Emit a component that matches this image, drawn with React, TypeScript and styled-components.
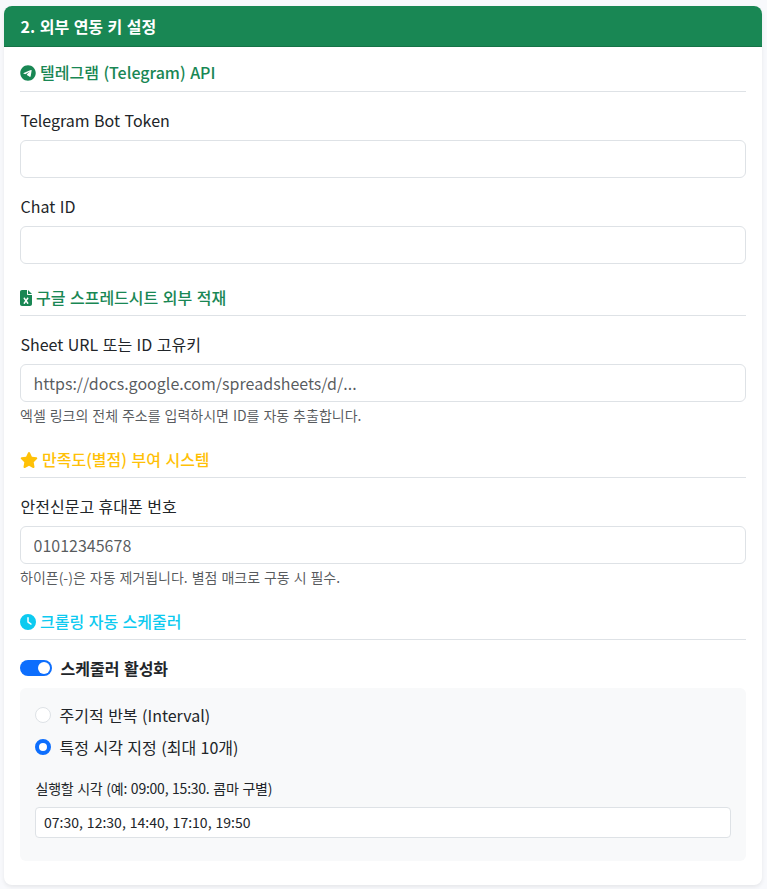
import React, { useState } from "react";
import styled, { createGlobalStyle } from "styled-components";
import { FaTelegram, FaFileExcel, FaStar, FaClock } from "react-icons/fa6";

const GlobalStyle = createGlobalStyle`
  *, *::before, *::after { box-sizing: border-box; }
  body {
    margin: 0;
    background: #f8f9fa;
    color: #212529;
    font-family: "Noto Sans CJK KR", "Noto Sans KR", sans-serif;
    font-size: 16px;
    line-height: 1.5;
    word-spacing: 0.9px;
  }
`;

const Page = styled.main`
  height: 889px;
  overflow: hidden;
  padding: 6px 5px 4px 4px;
  background: #f8f9fc;
`;

const Card = styled.section`
  height: 879px;
  border-radius: 8px;
  background: #fff;
  box-shadow: 0 2px 4px rgba(0, 0, 0, 0.075);
`;

const CardHeader = styled.header`
  height: 41px;
  padding: 8px 16.5px;
  border-bottom: 1px solid #167347;
  border-radius: 8px 8px 0 0;
  background: #198754;
  color: #fff;
  font-weight: 700;
`;

const CardBody = styled.div`
  padding: 16px;
`;

const Section = styled.section<{ $gap?: number }>`
  margin-bottom: ${({ $gap = 24 }) => $gap}px;
`;

const Heading = styled.h6<{ $color: string; $icon?: number; $pad?: number }>`
  display: flex;
  align-items: center;
  gap: 4px;
  margin: 0 0 16px;
  padding-bottom: ${({ $pad = 8 }) => $pad}px;
  border-bottom: 1px solid #dee2e6;
  color: ${({ $color }) => $color};
  font-size: 16px;
  font-weight: 500;
  line-height: 19px;

  svg {
    flex: none;
    height: 16px;
    width: ${({ $icon = 16 }) => $icon}px;
  }
`;

const Field = styled.div`
  & + & {
    margin-top: 16px;
  }
`;

const Label = styled.label<{ $small?: boolean }>`
  display: block;
  margin-bottom: 8px;
  padding-left: 0.5px;
  font-size: ${({ $small }) => ($small ? 14 : 16)}px;
  letter-spacing: ${({ $small }) => ($small ? "-0.24px" : "normal")};
`;

const Input = styled.input<{ $small?: boolean }>`
  display: block;
  width: 100%;
  height: ${({ $small }) => ($small ? 31 : 38)}px;
  padding: ${({ $small }) => ($small ? "3px 8px 5px" : "6px 12.5px")};
  border: 1px solid #dee2e6;
  border-radius: ${({ $small }) => ($small ? 4 : 6)}px;
  background: #fff;
  color: #212529;
  font-family: inherit;
  font-size: ${({ $small }) => ($small ? 14 : 16)}px;
  line-height: 1.5;
  letter-spacing: 0.01px;
  word-spacing: 0.8px;
  outline: none;

  &::placeholder {
    color: rgba(33, 37, 41, 0.75);
    opacity: 1;
  }
`;

const Help = styled.div`
  margin-top: 3px;
  margin-bottom: 25px;
  color: rgba(33, 37, 41, 0.75);
  font-size: 14px;
  line-height: 20px;
  word-spacing: 0.8px;
`;

const Option = styled.label<{ $bold?: boolean }>`
  display: flex;
  align-items: center;
  gap: 8.5px;
  height: 24px;
  margin-bottom: 8px;
  font-weight: ${({ $bold }) => ($bold ? 700 : 400)};
`;

const Switch = styled.input`
  appearance: none;
  display: flex;
  align-items: center;
  justify-content: ${({ checked }) => (checked ? "flex-end" : "flex-start")};
  width: 32px;
  height: 16px;
  margin: 0;
  padding: 0 2px;
  border-radius: 16px;
  background: ${({ checked }) => (checked ? "#0d6efd" : "#adb5bd")};

  &::before {
    content: "";
    width: 12px;
    height: 12px;
    border-radius: 50%;
    background: #fff;
  }
`;

const Radio = styled.input`
  appearance: none;
  width: 16px;
  height: 16px;
  margin: 0;
  border: 1px solid #dee2e6;
  border-radius: 50%;
  background: #fff;

  &:checked {
    border: 4px solid #0d6efd;
  }
`;

const Panel = styled.div`
  height: 173px;
  padding: 15px;
  border-radius: 6px;
  background: #f8f9fa;
`;

const TimeField = styled.div`
  margin-top: 19px;
`;

export default function App() {
  const [enabled, setEnabled] = useState(true);
  const [mode, setMode] = useState("times");
  const [times, setTimes] = useState("07:30, 12:30, 14:40, 17:10, 19:50");

  return (
    <>
      <GlobalStyle />
      <Page>
        <Card>
          <CardHeader>2. 외부 연동 키 설정</CardHeader>
          <CardBody>
            <Section>
              <Heading $color="#198754" $pad={9}><FaTelegram />텔레그램 (Telegram) API</Heading>
              <Field>
                <Label htmlFor="token">Telegram Bot Token</Label>
                <Input id="token" />
              </Field>
              <Field>
                <Label htmlFor="chat">Chat ID</Label>
                <Input id="chat" />
              </Field>
            </Section>
            <Section $gap={0}>
              <Heading $color="#198754" $icon={12}><FaFileExcel />구글 스프레드시트 외부 적재</Heading>
              <Label htmlFor="sheet">Sheet URL 또는 ID 고유키</Label>
              <Input id="sheet" placeholder="https://docs.google.com/spreadsheets/d/..." />
              <Help>엑셀 링크의 전체 주소를 입력하시면 ID를 자동 추출합니다.</Help>
            </Section>
            <Section $gap={0}>
              <Heading $color="#ffc107" $icon={18}><FaStar />만족도(별점) 부여 시스템</Heading>
              <Label htmlFor="phone">안전신문고 휴대폰 번호</Label>
              <Input id="phone" placeholder="01012345678" />
              <Help>하이픈(-)은 자동 제거됩니다. 별점 매크로 구동 시 필수.</Help>
            </Section>
            <Section $gap={0}>
              <Heading $color="#0dcaf0"><FaClock />크롤링 자동 스케줄러</Heading>
              <Option $bold>
                <Switch
                  type="checkbox"
                  role="switch"
                  checked={enabled}
                  onChange={(e) => setEnabled(e.target.checked)}
                />
                스케줄러 활성화
              </Option>
              <Panel>
                <Option>
                  <Radio type="radio" name="mode" checked={mode === "interval"} onChange={() => setMode("interval")} />
                  주기적 반복 (Interval)
                </Option>
                <Option>
                  <Radio type="radio" name="mode" checked={mode === "times"} onChange={() => setMode("times")} />
                  특정 시각 지정 (최대 10개)
                </Option>
                <TimeField>
                  <Label $small htmlFor="times">실행할 시각 (예: 09:00, 15:30. 콤마 구별)</Label>
                  <Input $small id="times" value={times} onChange={(e) => setTimes(e.target.value)} />
                </TimeField>
              </Panel>
            </Section>
          </CardBody>
        </Card>
      </Page>
    </>
  );
}
